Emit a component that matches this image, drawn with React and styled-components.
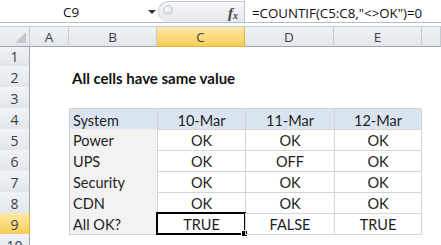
import styled, { createGlobalStyle, css } from "styled-components"

const GlobalStyle = createGlobalStyle`
    html, body {
        margin: 0;
        padding: 0;
        background: #ffffff;
        overflow: hidden;
    }
    body {
        font-family: "Lato", "Liberation Sans", sans-serif;
        color: #1e1e1e;
    }
`

const COLS = "30px 39px 88px 88px 89px 88px 1fr"

const rows = [
    { n: 1 },
    { n: 2, title: "All cells have same value" },
    { n: 3 },
    { n: 4, head: true, cells: ["System", "10-Mar", "11-Mar", "12-Mar"] },
    { n: 5, cells: ["Power", "OK", "OK", "OK"] },
    { n: 6, cells: ["UPS", "OK", "OFF", "OK"] },
    { n: 7, cells: ["Security", "OK", "OK", "OK"] },
    { n: 8, cells: ["CDN", "OK", "OK", "OK"] },
    { n: 9, cells: ["All OK?", "TRUE", "FALSE", "TRUE"], last: true },
    { n: 10 },
]

export default function App() {
    return (
        <Page>
            <GlobalStyle />
            <FormulaBar>
                <NameBox>
                    <span>C9</span>
                    <Arrow />
                </NameBox>
                <Grip>
                    <GripDot />
                    <Fx>f<sub>x</sub></Fx>
                </Grip>
                <Formula>=COUNTIF(C5:C8,"&lt;&gt;OK")=0</Formula>
            </FormulaBar>
            <Strip />
            <Sheet>
                <HeadRow>
                    <Corner><CornerTri /></Corner>
                    {["A", "B", "C", "D", "E", ""].map((c, i) => (
                        <ColHead key={i} $active={c === "C"}>{c}</ColHead>
                    ))}
                </HeadRow>
                {rows.map(r => (
                    <Row key={r.n}>
                        <RowHead $active={r.n === 9}>{r.n}</RowHead>
                        <Cell />
                        {r.title ? (
                            <Title>{r.title}</Title>
                        ) : r.cells ? (
                            r.cells.map((v, i) => (
                                <Cell
                                    key={i}
                                    $boxed
                                    $label={i === 0}
                                    $head={r.head}
                                    $lastCol={i === 3}
                                >
                                    {v}
                                    {r.n === 9 && i === 1 && (
                                        <Selection><Handle /></Selection>
                                    )}
                                </Cell>
                            ))
                        ) : (
                            <>
                                <Cell /><Cell /><Cell /><Cell />
                            </>
                        )}
                        <Cell />
                    </Row>
                ))}
            </Sheet>
        </Page>
    )
}

const Page = styled.div`
    width: 441px;
    height: 245px;
    overflow: hidden;
    display: flex;
    flex-direction: column;
    & > * {
        flex-shrink: 0;
    }
`
const FormulaBar = styled.div`
    height: 22px;
    display: flex;
    align-items: stretch;
    border-bottom: 1px solid #b6bcc6;
    background: #ffffff;
`
const NameBox = styled.div`
    width: 158px;
    display: flex;
    align-items: center;
    justify-content: center;
    position: relative;
    font-family: "Open Sans", "Liberation Sans", sans-serif;
    font-size: 13.5px;
    color: #111;
    span {
        margin-left: -16px;
        padding-top: 2px;
    }
`
const Arrow = styled.div`
    position: absolute;
    right: 2px;
    top: 10px;
    width: 0;
    height: 0;
    border-left: 4px solid transparent;
    border-right: 4px solid transparent;
    border-top: 4px solid #333;
`
const Grip = styled.div`
    width: 86px;
    display: flex;
    align-items: center;
    justify-content: space-between;
    margin-top: 1px;
    background: linear-gradient(#f6f7f9, #e4e7ec);
    border: 1px solid #c3c8d0;
    border-right: none;
    border-bottom: none;
    border-radius: 11px 0 0 11px;
    padding: 0 6px 0 4px;
    box-sizing: border-box;
`
const GripDot = styled.div`
    width: 8px;
    height: 8px;
    border-radius: 50%;
    background: radial-gradient(circle at 40% 40%, #ffffff, #c9ced6);
    border: 1px solid #c9ced6;
    margin-top: -4px;
`
const Fx = styled.div`
    font-family: "Liberation Serif", serif;
    font-style: italic;
    font-weight: bold;
    font-size: 15px;
    color: #3c4048;
    padding-top: 2px;
    sub {
        font-size: 10px;
        vertical-align: -1px;
    }
`
const Formula = styled.div`
    flex: 1;
    display: flex;
    align-items: center;
    padding-left: 7px;
    padding-top: 3px;
    border-left: 1px solid #c3c8d0;
    font-family: "Open Sans", "Liberation Sans", sans-serif;
    font-size: 13.3px;
    color: #111;
    white-space: nowrap;
`
const Strip = styled.div`
    height: 3px;
    background: #ffffff;
`
const Sheet = styled.div`
    display: flex;
    flex-direction: column;
    & > * {
        flex-shrink: 0;
    }
`
const HeadRow = styled.div`
    display: grid;
    grid-template-columns: ${COLS};
    height: 18px;
    border-top: 1px solid #c6ccd4;
`
const headBase = css`
    background: linear-gradient(#f1f3f6, #e2e6eb);
    border-right: 1px solid #c6ccd4;
    border-bottom: 1px solid #9ea7b3;
    box-sizing: border-box;
    display: flex;
    align-items: center;
    justify-content: center;
    font-family: "Open Sans", "Liberation Sans", sans-serif;
    font-size: 13.5px;
    color: #3a3f47;
    padding-top: 1px;
`
const activeHead = css`
    background: linear-gradient(#fde9a6, #f8cd58);
    color: #3a3f47;
    border-color: #e2b541;
`
const Corner = styled.div`
    ${headBase};
    position: relative;
`
const CornerTri = styled.div`
    position: absolute;
    right: 3px;
    bottom: 3px;
    width: 0;
    height: 0;
    border-left: 11px solid transparent;
    border-bottom: 11px solid #c3c8cf;
`
const ColHead = styled.div`
    ${headBase};
    ${p => p.$active && activeHead};
`
const Row = styled.div`
    display: grid;
    grid-template-columns: ${COLS};
    height: 21px;
`
const RowHead = styled.div`
    ${headBase};
    border-bottom: 1px solid #c6ccd4;
    border-right: 1px solid #9ea7b3;
    font-size: 14px;
    padding-top: 2px;
    ${p => p.$active && activeHead};
`
const Cell = styled.div`
    position: relative;
    box-sizing: border-box;
    display: flex;
    align-items: center;
    justify-content: ${p => (p.$label ? "flex-start" : "center")};
    padding-left: ${p => (p.$label ? "3px" : "0")};
    padding-top: 2px;
    font-size: 14.5px;
    color: #1e1e1e;
    white-space: nowrap;
    ${p => p.$boxed && css`
        border-left: 1px solid #d4d4d4;
        border-bottom: 1px solid #d4d4d4;
    `}
    ${p => p.$head && css`
        border-top: 1px solid #d4d4d4;
        background: #dbe5f1;
    `}
    ${p => p.$label && !p.$head && css`
        background: #f2f2f2;
    `}
    ${p => p.$lastCol && css`
        border-right: 1px solid #d4d4d4;
    `}
`
const Title = styled.div`
    grid-column: span 4;
    display: flex;
    align-items: center;
    padding-left: 3px;
    padding-top: 2px;
    font-size: 15px;
    font-weight: bold;
    color: #111;
    white-space: nowrap;
`
const Selection = styled.div`
    position: absolute;
    left: -2px;
    top: -1px;
    right: -1px;
    bottom: -1px;
    border: 2px solid #000;
    pointer-events: none;
`
const Handle = styled.div`
    position: absolute;
    right: -4px;
    bottom: -4px;
    width: 5px;
    height: 5px;
    background: #000;
    border: 1px solid #fff;
`
